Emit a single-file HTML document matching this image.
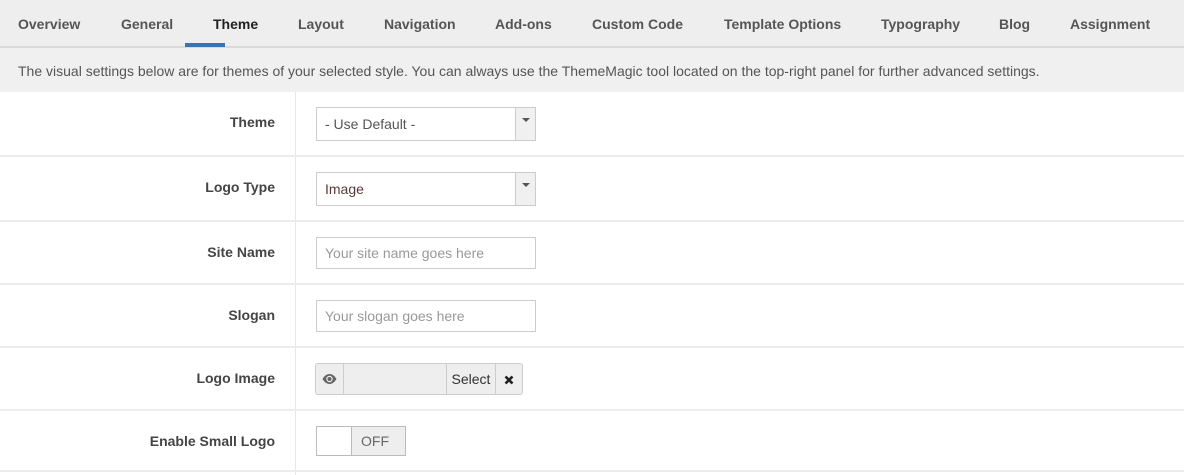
<!DOCTYPE html>
<html><head><style>
*{box-sizing:border-box;margin:0;padding:0}
body{width:1184px;height:475px;background:#fff;font-family:"Liberation Sans",Arial,sans-serif;position:relative;overflow:hidden}
.tabs{position:absolute;left:0;top:0;width:1184px;height:48px;background:#eeeeee;border-bottom:2px solid #d9d9d9}
.tab{position:absolute;top:16px;font-size:14px;font-weight:bold;color:#555;white-space:nowrap}
.desc{position:absolute;left:0;top:48px;width:1184px;height:44px;background:#f0f0f0;font-size:14px;color:#555;padding:15px 0 0 18px}
.vline{position:absolute;left:295px;top:92px;width:1px;height:383px;background:#e6e6e6}
.hl{position:absolute;left:0;width:1184px;height:2px;background:#ececec}
.lbl{position:absolute;right:909px;font-size:14px;font-weight:bold;color:#444;white-space:nowrap}
.box{position:absolute;left:316px;border:1px solid #ccc;background:#fff;font-size:14px;color:#555;padding-left:8px}
.ph{color:#999}
.arrow{position:absolute;right:0;top:0;bottom:0;width:20px;background:#f0f0f0;border-left:1px solid #ccc}
.arrow:after{content:"";position:absolute;left:6px;top:10px;border-left:4px solid transparent;border-right:4px solid transparent;border-top:4px solid #555}
</style></head><body>
<div class="tabs">
<span class="tab" style="left:18px">Overview</span>
<span class="tab" style="left:121px">General</span>
<span class="tab" style="left:213px;color:#222">Theme</span>
<span class="tab" style="left:298px">Layout</span>
<span class="tab" style="left:384px">Navigation</span>
<span class="tab" style="left:495px">Add-ons</span>
<span class="tab" style="left:592px">Custom Code</span>
<span class="tab" style="left:724px">Template Options</span>
<span class="tab" style="left:881px">Typography</span>
<span class="tab" style="left:999px">Blog</span>
<span class="tab" style="left:1070px">Assignment</span>
<div style="position:absolute;left:185px;top:43px;width:40px;height:4px;background:#3c72b3"></div>
</div>
<div class="desc">The visual settings below are for themes of your selected style. You can always use the ThemeMagic tool located on the top-right panel for further advanced settings.</div>
<div class="vline"></div>
<div class="hl" style="top:155px"></div>
<div class="hl" style="top:220px"></div>
<div class="hl" style="top:283px"></div>
<div class="hl" style="top:346px"></div>
<div class="hl" style="top:409px"></div>
<div class="hl" style="top:470px"></div>

<span class="lbl" style="top:114px">Theme</span>
<div class="box" style="top:107px;width:220px;height:34px;line-height:32px">- Use Default -<div class="arrow"></div></div>

<span class="lbl" style="top:179px">Logo Type</span>
<div class="box" style="top:172px;width:220px;height:34px;line-height:32px;color:#5a3a3a">Image<div class="arrow"></div></div>

<span class="lbl" style="top:244px">Site Name</span>
<div class="box ph" style="top:237px;width:220px;height:32px;line-height:30px">Your site name goes here</div>

<span class="lbl" style="top:307px">Slogan</span>
<div class="box ph" style="top:300px;width:220px;height:32px;line-height:30px">Your slogan goes here</div>

<span class="lbl" style="top:370px">Logo Image</span>
<div style="position:absolute;left:315px;top:363px;width:208px;height:32px;border:1px solid #ccc;border-radius:3px;background:#eeeeee;font-size:14px;color:#333">
<svg style="position:absolute;left:6px;top:9px" width="15" height="12" viewBox="0 0 15 12"><path d="M0.5 6C2.5 2.5 5 1 7.5 1S12.5 2.5 14.5 6C12.5 9.5 10 11 7.5 11S2.5 9.5 0.5 6Z" fill="#666"/><circle cx="7.5" cy="6" r="3.2" fill="#eee"/><circle cx="7.5" cy="6" r="2" fill="#666"/></svg>
<div style="position:absolute;left:27px;top:0;width:1px;height:30px;background:#ccc"></div>
<div style="position:absolute;left:130px;top:0;width:50px;height:30px;border-left:1px solid #ccc;border-right:1px solid #ccc;line-height:30px;text-align:center">Select</div>
<svg style="position:absolute;left:188px;top:11px" width="10" height="10" viewBox="0 0 10 10"><path d="M1.5 1.5L8.5 8.5M8.5 1.5L1.5 8.5" stroke="#222" stroke-width="2.6"/></svg>
</div>

<span class="lbl" style="top:433px">Enable Small Logo</span>
<div style="position:absolute;left:316px;top:426px;width:90px;height:30px;border:1px solid #bbb;background:#fff">
<div style="position:absolute;left:34px;top:0;width:54px;height:28px;border-left:1px solid #bbb;background:#eeeeee;line-height:28px;font-size:14px;color:#666;padding-left:9px">OFF</div>
</div>
</body></html>
